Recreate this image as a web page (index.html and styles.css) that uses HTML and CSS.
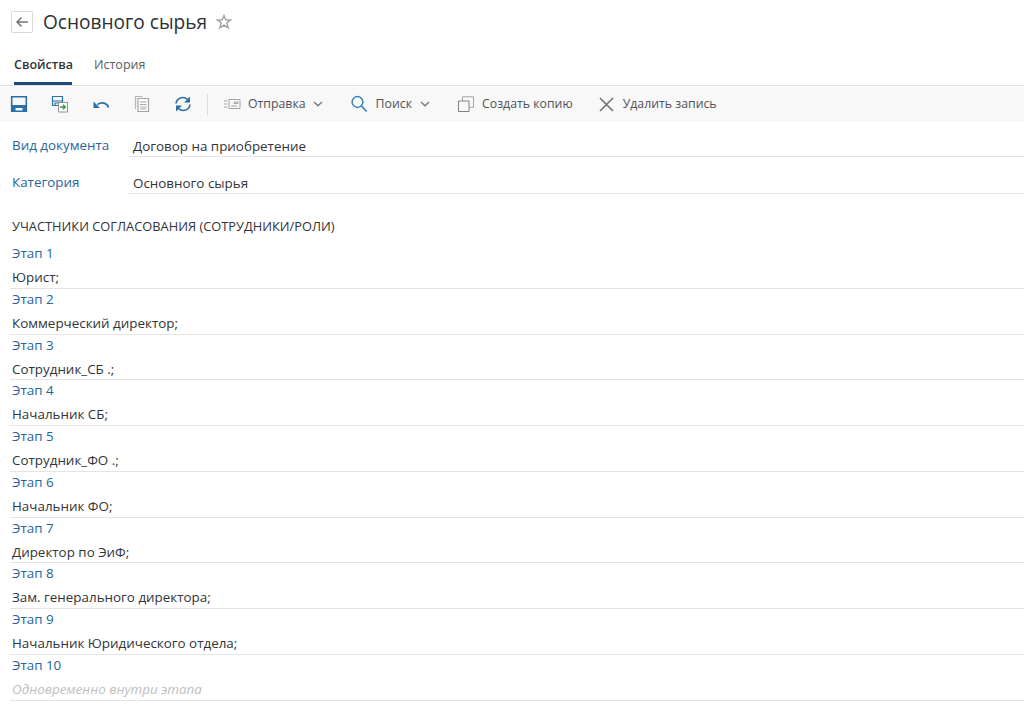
FILE: index.html
```html
<!DOCTYPE html>
<html>
  <head>
    <title>Основного сырья</title>
    <link rel="stylesheet" href="styles.css">
  </head>
  <body>
    <div class="header">
      <button class="back-button">
        <svg width="14" height="12" viewBox="0 0 14 12"><path d="M13 6H2M6.500 1.500 2 6l4.500 4.500" fill="none" stroke="#6f7378" stroke-width="1.500"/></svg>
      </button>
      <p class="title">Основного сырья</p>
      <svg class="star" width="16" height="16" viewBox="0 0 16 16"><path d="M8 1.500 9.900 6h4.700l-3.800 3 1.400 4.800L8 11.100l-4.200 2.700L5.200 9 1.400 6h4.700z" fill="none" stroke="#a3a7ab" stroke-width="1.500"/></svg>
    </div>

    <div class="tabs">
      <div class="tab tab-active">Свойства</div>
      <div class="tab">История</div>
    </div>

    <div class="toolbar">
      <svg class="tool-icon" width="18" height="18" viewBox="0 0 18 18"><path d="M1.700 1.700h14.600v14.600H1.700z" fill="none" stroke="#2c6ea6" stroke-width="1.600"/><path d="M2 10h14v7h-3.500v-4h-7v4H2z" fill="#2c6ea6"/></svg>
      <svg class="tool-icon" width="18" height="18" viewBox="0 0 18 18"><path d="M1.500 1.500h10v9h-10zM1.500 6h10M4 10.500V8h5v2.500" fill="none" stroke="#2c6ea6" stroke-width="1.200"/><path d="M7.500 7.500h9v9.500h-9z" fill="#fff" stroke="#8b9196"/><path d="M9 12h5M12 9.800l2.300 2.200-2.300 2.200" fill="none" stroke="#3d9a46" stroke-width="1.500"/></svg>
      <svg class="tool-icon" width="18" height="18" viewBox="0 0 18 18"><path d="M16.500 12.500C15 8 10 6.500 5.500 9.500" fill="none" stroke="#2c6ea6" stroke-width="1.700"/><path d="M1.500 6.500v6.500h6.500z" fill="#2c6ea6"/></svg>
      <svg class="tool-icon" width="18" height="18" viewBox="0 0 18 18"><path d="M2.500 14V1.500h7" fill="none" stroke="#b4b8bc" stroke-width="1.200"/><path d="M5 3.500h10.500v13H5z" fill="#fff" stroke="#a0a5aa" stroke-width="1.200"/><path d="M7 7h6.500M7 9.500h6.500M7 12h6.500M7 14h6.500" stroke="#a0a5aa"/></svg>
      <svg class="tool-icon" width="18" height="18" viewBox="0 0 18 18"><path d="M2 8.500a6.800 6.800 0 0 1 11.500-4M16 9.500a6.800 6.800 0 0 1-11.500 4" fill="none" stroke="#2c6ea6" stroke-width="1.600"/><path d="M16 1.500v6h-6zM2 16.500v-6h6z" fill="#2c6ea6"/></svg>
      <div class="tool-divider"></div>
      <div class="tool-button tool-send">
        <svg width="18" height="12" viewBox="0 0 18 12"><path d="M6 1.500h11v9H6z" fill="none" stroke="#a0a5aa"/><path d="M11 4h4v1.500h-4zM1 3h3.500M1 6h3.500M1 9h3.500M8 8h6" stroke="#a0a5aa" fill="none"/></svg>
        Отправка
        <svg class="chevron" width="10" height="6" viewBox="0 0 10 6"><path d="M1 1l4 3.800L9 1" fill="none" stroke="#787c80" stroke-width="1.400"/></svg>
      </div>
      <div class="tool-button tool-search">
        <svg width="18" height="18" viewBox="0 0 18 18"><circle cx="7.500" cy="7" r="5.400" fill="none" stroke="#3c82b8" stroke-width="1.500"/><path d="M11.500 11l5 5.500" stroke="#3c82b8" stroke-width="1.800"/></svg>
        Поиск
        <svg class="chevron" width="10" height="6" viewBox="0 0 10 6"><path d="M1 1l4 3.800L9 1" fill="none" stroke="#787c80" stroke-width="1.400"/></svg>
      </div>
      <div class="tool-button tool-copy">
        <svg width="16" height="16" viewBox="0 0 16 16"><path d="M.5 5h10.500v10.500H.5z" fill="none" stroke="#7c8084"/><path d="M4.500 5V.8h11v10.500H11" fill="none" stroke="#a0a5aa"/></svg>
        Создать копию
      </div>
      <div class="tool-button tool-delete">
        <svg width="15" height="15" viewBox="0 0 15 15"><path d="M1 1l13 13M14 1 1 14" stroke="#6b6f73" stroke-width="1.500"/></svg>
        Удалить запись
      </div>
    </div>

    <div class="fields">
      <div class="field">
        <div class="field-label">Вид документа</div>
        <div class="field-value">Договор на приобретение</div>
      </div>
      <div class="field">
        <div class="field-label">Категория</div>
        <div class="field-value">Основного сырья</div>
      </div>
    </div>

    <p class="section-title">УЧАСТНИКИ СОГЛАСОВАНИЯ (СОТРУДНИКИ/РОЛИ)</p>

    <div class="stages">
      <div class="stage"><div class="stage-name">Этап 1</div><div class="stage-value">Юрист;</div></div>
      <div class="stage"><div class="stage-name">Этап 2</div><div class="stage-value">Коммерческий директор;</div></div>
      <div class="stage"><div class="stage-name">Этап 3</div><div class="stage-value">Сотрудник_СБ .;</div></div>
      <div class="stage"><div class="stage-name">Этап 4</div><div class="stage-value">Начальник СБ;</div></div>
      <div class="stage"><div class="stage-name">Этап 5</div><div class="stage-value">Сотрудник_ФО .;</div></div>
      <div class="stage"><div class="stage-name">Этап 6</div><div class="stage-value">Начальник ФО;</div></div>
      <div class="stage"><div class="stage-name">Этап 7</div><div class="stage-value">Директор по ЭиФ;</div></div>
      <div class="stage"><div class="stage-name">Этап 8</div><div class="stage-value">Зам. генерального директора;</div></div>
      <div class="stage"><div class="stage-name">Этап 9</div><div class="stage-value">Начальник Юридического отдела;</div></div>
      <div class="stage"><div class="stage-name">Этап 10</div><div class="stage-value stage-empty">Одновременно внутри этапа</div></div>
    </div>
  </body>
</html>
```

FILE: styles.css
```css
body {
  margin: 0;
  height: 704px;
  overflow: hidden;
  background-color: white;
  font-family: "Open Sans", "Noto Sans", sans-serif;
  font-size: 13.4px;
  line-height: 18px;
  color: rgb(50, 52, 56);
}

.header {
  display: flex;
  align-items: center;
  height: 44px;
  padding-left: 11px;
}

.back-button {
  display: flex;
  align-items: center;
  justify-content: center;
  width: 22px;
  height: 22px;
  padding: 0;
  background-color: white;
  border: solid 1px rgb(215, 215, 215);
  border-radius: 2px;
}

.title {
  margin: 0 0 0 10px;
  font-size: 19.100px;
  line-height: 26px;
  color: rgb(45, 48, 52);
}

.star {
  margin-left: 9px;
}

.tabs {
  display: flex;
  height: 41px;
  padding-left: 14px;
  gap: 22px;
  font-size: 12.500px;
  border-bottom: solid 1px rgb(225, 225, 225);
}

.tab {
  padding-top: 12px;
  color: rgb(90, 92, 96);
}

.tab-active {
  width: 58px;
  height: 26px;
  color: rgb(50, 52, 56);
  font-weight: 600;
  border-bottom: solid 3px rgb(28, 72, 125);
}

.toolbar {
  display: flex;
  align-items: center;
  height: 36px;
  padding-left: 10px;
  font-size: 12.300px;
  background-color: rgb(248, 248, 248);
  color: rgb(80, 82, 86);
}

.tool-icon {
  margin-right: 23px;
}

.tool-divider {
  width: 1px;
  height: 21px;
  margin-left: -8px;
  background-color: rgb(220, 220, 220);
}

.tool-button {
  display: flex;
  align-items: center;
  gap: 8px;
}

.tool-send {
  margin-left: 15px;
  gap: 7px;
}

.tool-search {
  margin-left: 27px;
}

.tool-copy {
  margin-left: 28px;
}

.tool-delete {
  margin-left: 26px;
  gap: 9px;
}

.fields {
  padding-top: 6px;
}

.field {
  display: flex;
  height: 36.500px;
}

.field-label {
  width: 116px;
  padding: 8px 0 0 12px;
  color: rgb(40, 100, 155);
}

.field-value {
  flex: 1;
  height: 19px;
  padding: 9px 0 0 5px;
  border-bottom: solid 1px rgb(228, 228, 228);
}

.section-title {
  margin: 0;
  padding: 16px 0 0 12px;
  height: 26px;
  font-size: 12.850px;
}

.stages {
  padding-left: 12px;
}

.stage {
  height: 44.750px;
  margin-left: -2px;
  padding-left: 2px;
  border-bottom: solid 1px rgb(228, 228, 228);
}

.stage-name {
  height: 24px;
  padding-top: 1px;
  color: rgb(40, 100, 155);
}

.stage-empty {
  font-style: italic;
  color: rgb(190, 190, 190);
}
```
